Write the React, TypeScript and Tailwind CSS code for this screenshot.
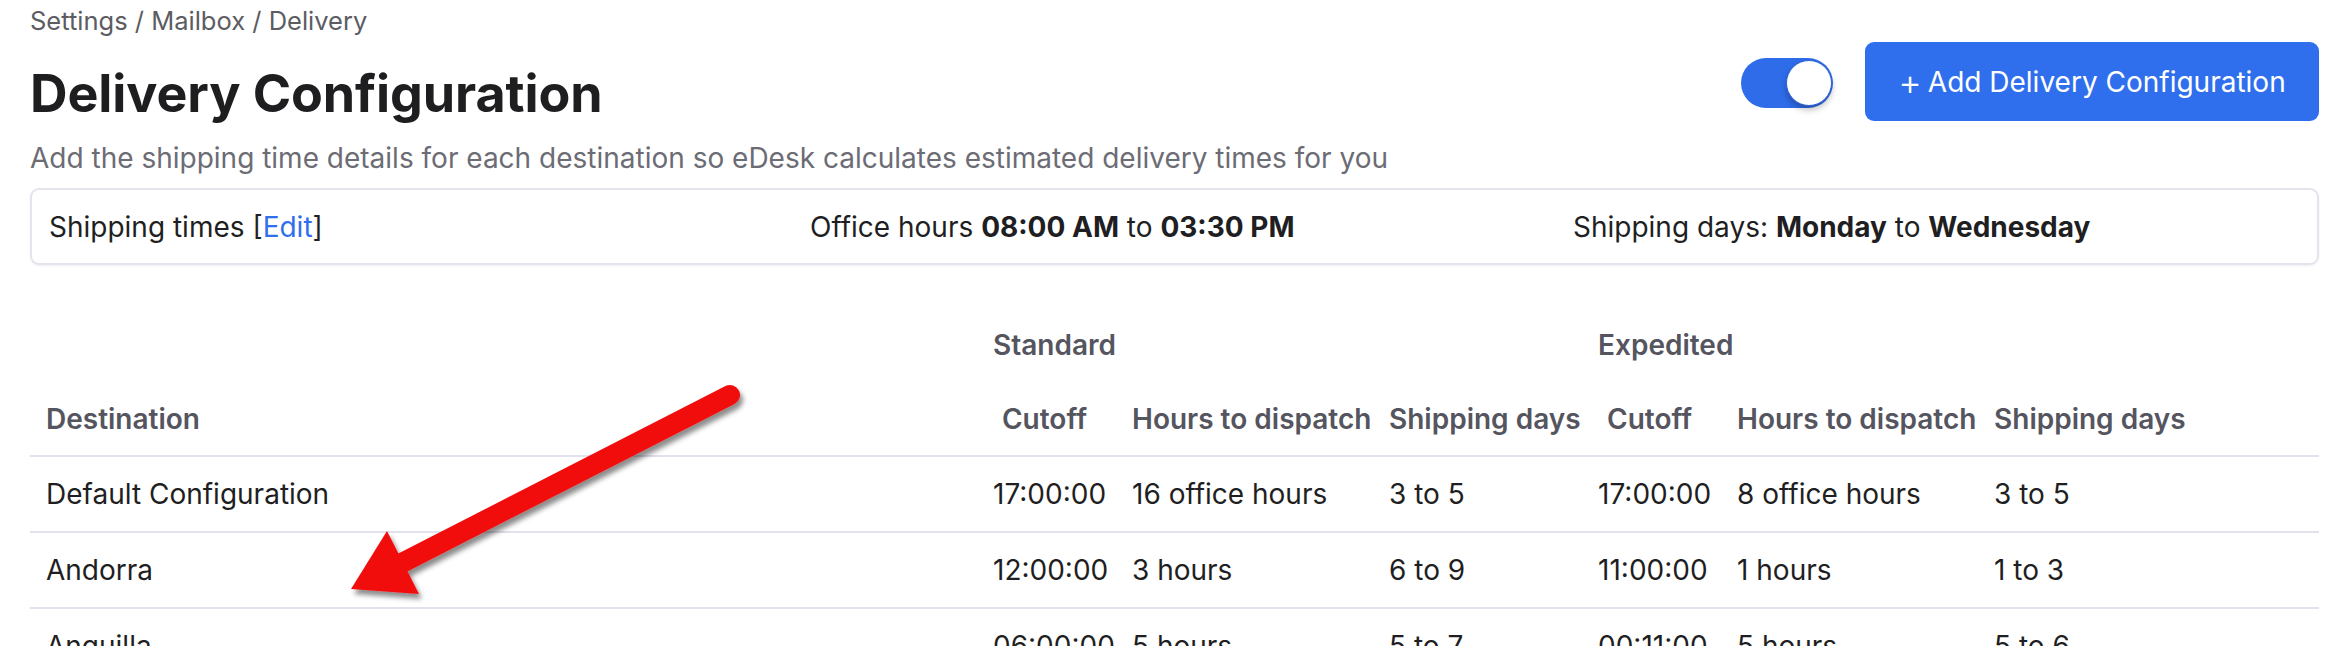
import React from 'react';

interface DeliveryRow {
  destination: string;
  stdCutoff: string;
  stdHours: string;
  stdDays: string;
  expCutoff: string;
  expHours: string;
  expDays: string;
}

const rows: DeliveryRow[] = [
  { destination: 'Default Configuration', stdCutoff: '17:00:00', stdHours: '16 office hours', stdDays: '3 to 5', expCutoff: '17:00:00', expHours: '8 office hours', expDays: '3 to 5' },
  { destination: 'Andorra', stdCutoff: '12:00:00', stdHours: '3 hours', stdDays: '6 to 9', expCutoff: '11:00:00', expHours: '1 hours', expDays: '1 to 3' },
  { destination: 'Anguilla', stdCutoff: '06:00:00', stdHours: '5 hours', stdDays: '5 to 7', expCutoff: '00:11:00', expHours: '5 hours', expDays: '5 to 6' },
];

// red annotation arrow drawn over the table
const Arrow = () => (
  <svg className="pointer-events-none absolute left-0 top-0" width="2344" height="646" viewBox="0 0 2344 646">
    <defs>
      <filter id="arrowShadow" x="-20%" y="-20%" width="140%" height="140%">
        <feDropShadow dx="3" dy="5" stdDeviation="2.5" floodColor="#000" floodOpacity="0.45" />
      </filter>
    </defs>
    <g filter="url(#arrowShadow)" fill="#f20c0c" stroke="none">
      <line x1="730" y1="395" x2="396" y2="566" stroke="#f20c0c" strokeWidth="20" strokeLinecap="round" />
      <polygon points="351,589 387,531 419,594" />
    </g>
  </svg>
);

const App: React.FC = () => {
  const cell = 'pl-[16px] text-left font-normal whitespace-nowrap';
  return (
    <div className="relative h-[646px] w-[2344px] overflow-hidden bg-white pl-[30px] pr-[25px] font-['Inter',sans-serif] text-[#1f1f23]">
      <div className="flex h-[42px] items-center text-[25.5px] text-[#5c5c63]">Settings / Mailbox / Delivery</div>

      <div className="flex items-start justify-between">
        <div>
          <h1 className="mt-[24px] text-[52px] font-bold leading-[56px] tracking-[-0.1px] text-[#1e1e20]">Delivery Configuration</h1>
          <p className="mt-[18px] text-[28px] leading-[36px] text-[#6c6c75]">
            Add the shipping time details for each destination so eDesk calculates estimated delivery times for you
          </p>
        </div>
        <div className="flex items-center gap-[32px]">
          <div className="relative mt-[3px] h-[50px] w-[92px] rounded-full bg-[#2e6ce9]">
            <div className="absolute right-[1px] top-[2px] h-[46px] w-[46px] rounded-full border border-[#2a62d6] bg-white shadow-[0_4px_6px_rgba(0,0,0,0.25)]" />
          </div>
          <button className="flex h-[79px] w-[454px] items-center justify-center gap-[6px] rounded-[9px] bg-[#2f6fed] text-[28px] text-white">
            <span className="text-[36px] font-light leading-none">+</span>
            <span>Add Delivery Configuration</span>
          </button>
        </div>
      </div>

      <div className="mt-[12px] grid h-[77px] grid-cols-[761px_763px_1fr] items-center rounded-[9px] border-2 border-[#e4e3ee] pl-[17px] text-[28px] shadow-[0_1px_2px_rgba(40,40,80,0.08)]">
        <div>
          Shipping times [<span className="text-[#2f6fed]">Edit</span>]
        </div>
        <div>
          Office hours <b className="font-bold">08:00 AM</b> to <b className="font-bold">03:30 PM</b>
        </div>
        <div>
          Shipping days: <b className="font-bold">Monday</b> to <b className="font-bold">Wednesday</b>
        </div>
      </div>

      <table className="mt-[42px] w-[2289px] table-fixed border-collapse text-[28px]">
        <colgroup>
          <col className="w-[947px]" />
          <col className="w-[139px]" />
          <col className="w-[257px]" />
          <col className="w-[209px]" />
          <col className="w-[139px]" />
          <col className="w-[257px]" />
          <col className="w-[341px]" />
        </colgroup>
        <thead className="text-[#55555f]">
          <tr className="h-[76px]">
            <th />
            <th colSpan={3} className="pl-[16px] text-left font-semibold">Standard</th>
            <th colSpan={3} className="pl-[16px] text-left font-semibold">Expedited</th>
          </tr>
          <tr className="h-[73px] border-b-2 border-[#e2e1ee]">
            <th className="pl-[16px] text-left font-semibold">Destination</th>
            <th className="pr-[4px] text-center font-semibold">Cutoff</th>
            <th className="pl-[16px] text-left font-semibold whitespace-nowrap">Hours to dispatch</th>
            <th className="pl-[16px] text-left font-semibold whitespace-nowrap">Shipping days</th>
            <th className="pr-[4px] text-center font-semibold">Cutoff</th>
            <th className="pl-[16px] text-left font-semibold whitespace-nowrap">Hours to dispatch</th>
            <th className="pl-[16px] text-left font-semibold whitespace-nowrap">Shipping days</th>
          </tr>
        </thead>
        <tbody>
          {rows.map((r) => (
            <tr key={r.destination} className="h-[76px] border-b-2 border-[#e2e1ee]">
              <td className={cell}>{r.destination}</td>
              <td className={cell}>{r.stdCutoff}</td>
              <td className={cell}>{r.stdHours}</td>
              <td className={cell}>{r.stdDays}</td>
              <td className={cell}>{r.expCutoff}</td>
              <td className={cell}>{r.expHours}</td>
              <td className={cell}>{r.expDays}</td>
            </tr>
          ))}
        </tbody>
      </table>

      <Arrow />
    </div>
  );
};

export default App;
